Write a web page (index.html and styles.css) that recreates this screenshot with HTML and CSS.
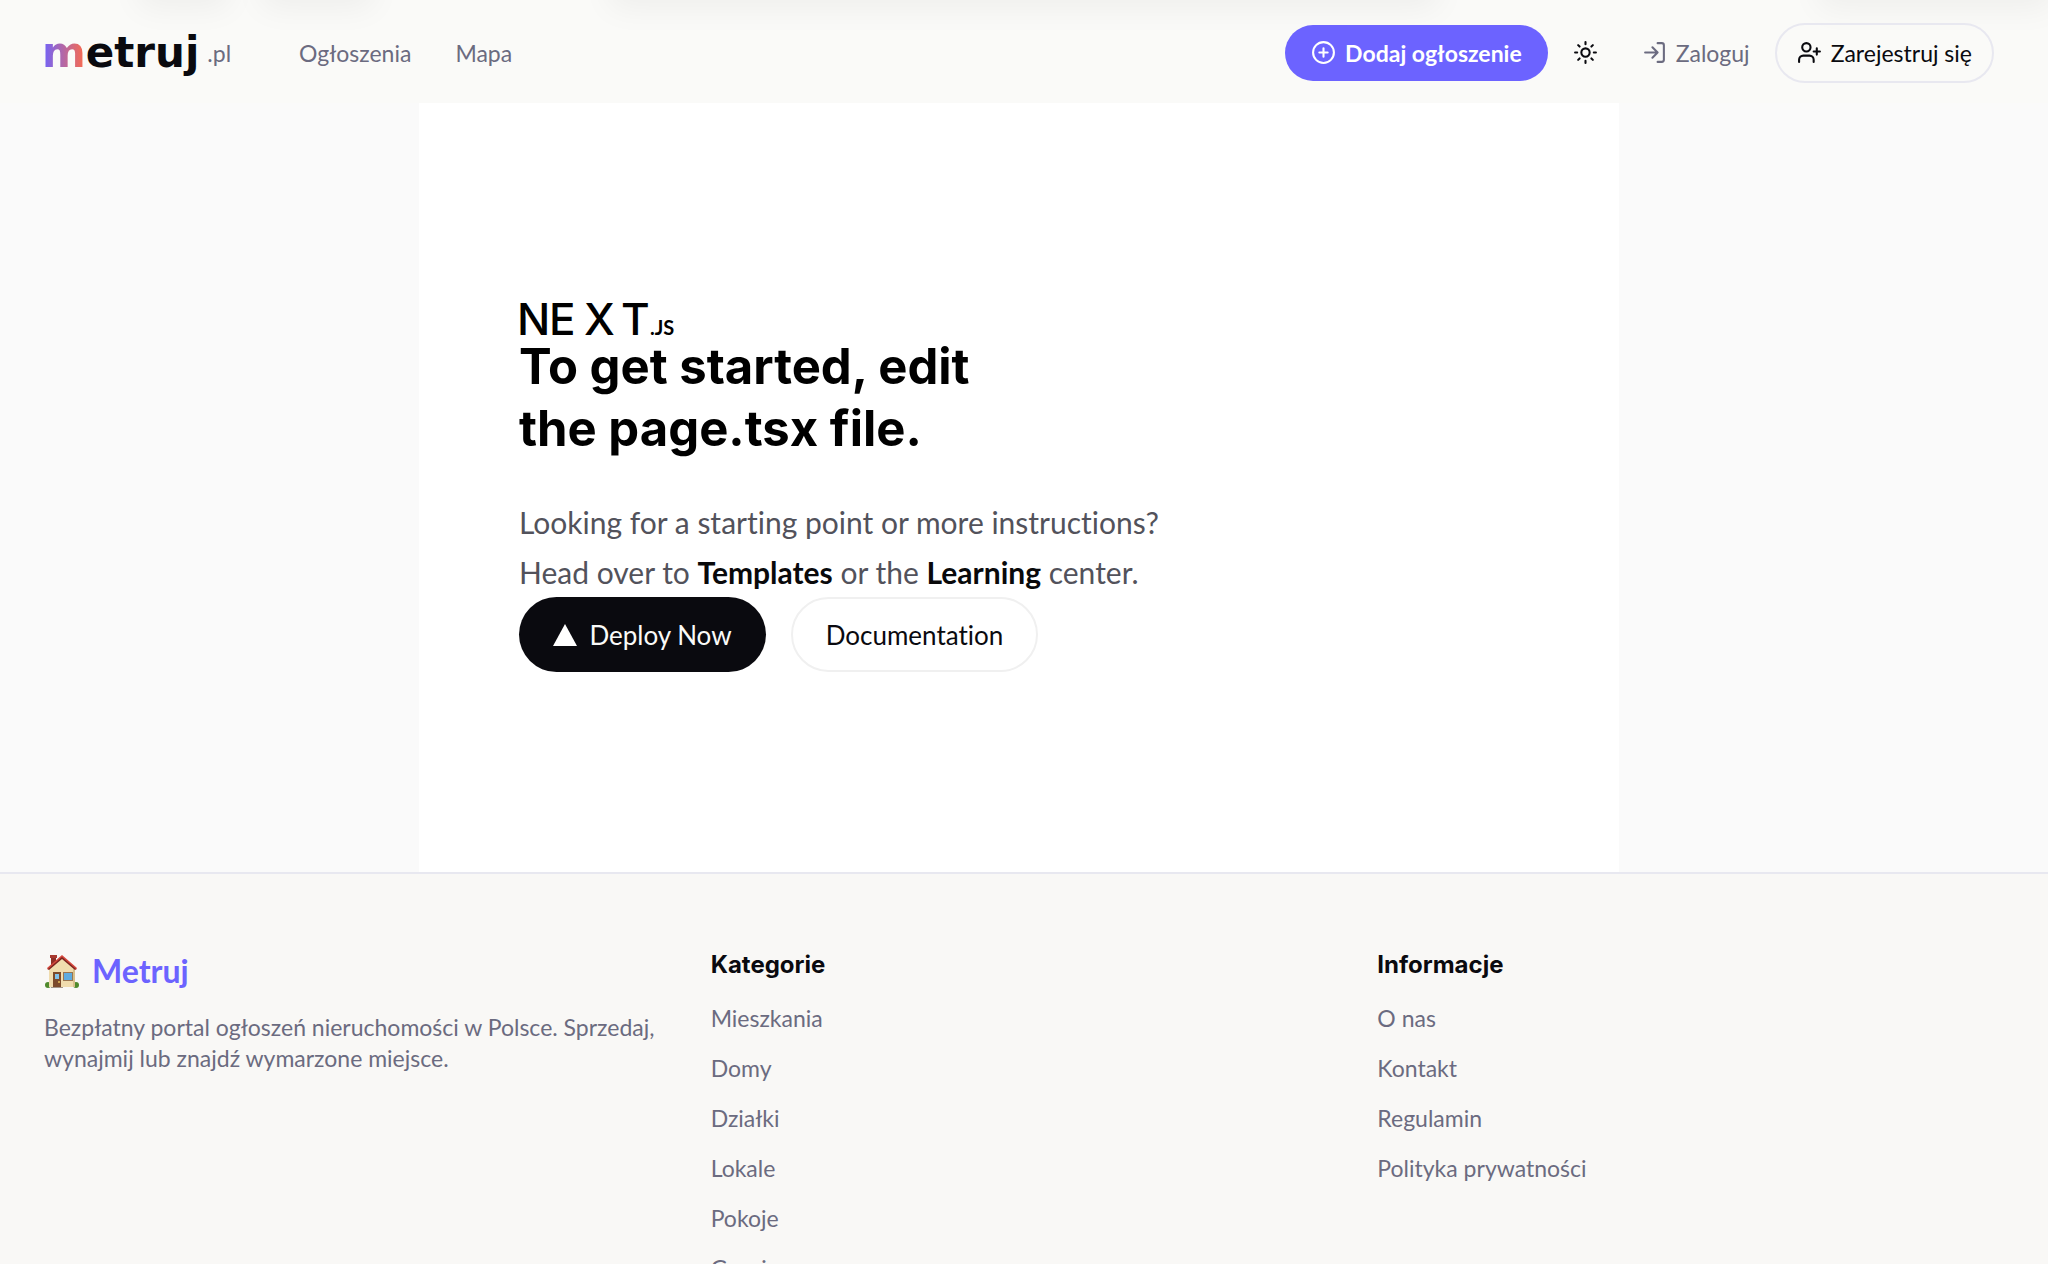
FILE: index.html
```html
<!DOCTYPE html>
<html lang="pl">
<head>
    <meta charset="UTF-8">
    <meta name="viewport" content="width=device-width, initial-scale=1.0">
    <title>Metruj.pl</title>
    <link rel="stylesheet" href="styles.css">
</head>
<body>
    <header class="header">
        <!-- soft shadows along the top edge -->
        <span class="shade shade-1"></span>
        <span class="shade shade-2"></span>
        <span class="shade shade-3"></span>
        <span class="shade shade-4"></span>
        <a class="brand" href="#"><span class="brand-name"><span class="brand-m">m</span>etruj</span><span class="brand-tld">.pl</span></a>
        <nav class="nav">
            <a href="#">Ogłoszenia</a>
            <a href="#">Mapa</a>
        </nav>
        <div class="actions">
            <button class="btn btn-primary" type="button">
                <svg class="icon" viewBox="0 0 24 24"><circle cx="12" cy="12" r="10"/><path d="M8 12h8M12 8v8"/></svg>
                Dodaj ogłoszenie
            </button>
            <button class="btn-theme" type="button" aria-label="Zmień motyw">
                <svg class="icon" viewBox="0 0 24 24"><circle cx="12" cy="12" r="4"/><path d="M12 2v2M12 20v2M4.93 4.93l1.41 1.41M17.66 17.66l1.41 1.41M2 12h2M20 12h2M6.34 17.66l-1.41 1.41M19.07 4.93l-1.41 1.41"/></svg>
            </button>
            <a class="btn btn-ghost" href="#">
                <svg class="icon" viewBox="0 0 24 24"><path d="M15 3h4a2 2 0 0 1 2 2v14a2 2 0 0 1-2 2h-4M10 17l5-5-5-5M15 12H3"/></svg>
                Zaloguj
            </a>
            <a class="btn btn-outline" href="#">
                <svg class="icon" viewBox="0 0 24 24"><path d="M16 21v-2a4 4 0 0 0-4-4H6a4 4 0 0 0-4 4v2"/><circle cx="9" cy="7" r="4"/><path d="M19 8v6M22 11h-6"/></svg>
                Zarejestruj się
            </a>
        </div>
    </header>

    <div class="page">
        <main class="main">
            <svg class="next-logo" viewBox="0 0 158 34" role="img" aria-label="Next.js logo">
                <text class="next-word" x="-2 30 65 102" y="33">NEXT</text>
                <text class="next-js" x="131" y="33">.JS</text>
            </svg>
            <h1 class="title">To get started, edit<br>the page.tsx file.</h1>
            <p class="intro">Looking for a starting point or more instructions?<br>Head over to <a href="#">Templates</a> or the <a href="#">Learning</a> center.</p>
            <div class="links">
                <a class="pill pill-dark" href="#">
                    <svg class="triangle" viewBox="0 0 24 22"><path d="M12 0l12 22H0z"/></svg>
                    Deploy Now
                </a>
                <a class="pill pill-light" href="#">Documentation</a>
            </div>
        </main>
    </div>

    <footer class="footer">
        <div>
            <a class="footer-brand" href="#">
                <svg class="house" viewBox="0 0 36 36">
                    <ellipse cx="4" cy="32" rx="3" ry="3" fill="#4f8a2c"/>
                    <ellipse cx="32" cy="32" rx="3" ry="3" fill="#4f8a2c"/>
                    <path d="M7 3h5v10H7z" fill="#8f2f27"/>
                    <path d="M6 2h7v3H6z" fill="#a83a30"/>
                    <path d="M5 16L18 5l13 11v18H5z" fill="#f0dcae"/>
                    <path d="M29 15l2 2v17h-2z" fill="#d8c08c"/>
                    <path d="M18 2l15 13-1 2L18 5 4 17l-1-2z" fill="#d5483d"/>
                    <path d="M18 4l14 12-1 1L18 6 5 17l-1-1z" fill="#7d2520"/>
                    <path d="M9 19h8v15H9z" fill="#7b4a2b"/>
                    <path d="M11 21h4v5h-4z" fill="#7fc0ea"/>
                    <circle cx="15" cy="29" r="1" fill="#e5bd5b"/>
                    <path d="M19 19h10v9H19z" fill="#9a7650"/>
                    <path d="M20 20h8v7h-8z" fill="#5fabdf"/>
                    <path d="M7 34h12v1H7z" fill="#a3968a"/>
                </svg>
                Metruj
            </a>
            <p class="about">Bezpłatny portal ogłoszeń nieruchomości w Polsce. Sprzedaj, wynajmij lub znajdź wymarzone miejsce.</p>
        </div>
        <div>
            <h2 class="footer-title">Kategorie</h2>
            <ul class="footer-list">
                <li><a href="#">Mieszkania</a></li>
                <li><a href="#">Domy</a></li>
                <li><a href="#">Działki</a></li>
                <li><a href="#">Lokale</a></li>
                <li><a href="#">Pokoje</a></li>
                <li><a href="#">Garaże</a></li>
            </ul>
        </div>
        <div>
            <h2 class="footer-title">Informacje</h2>
            <ul class="footer-list">
                <li><a href="#">O nas</a></li>
                <li><a href="#">Kontakt</a></li>
                <li><a href="#">Regulamin</a></li>
                <li><a href="#">Polityka prywatności</a></li>
            </ul>
        </div>
    </footer>
</body>
</html>
```
FILE: styles.css
```css
* {
    box-sizing: border-box;
}
:root {
    --ink: #0a0a0f;
    --muted: #6b6b80;
    --accent: #6c63ff;
    --line: #e8e8f0;
}
body {
    margin: 0;
    height: 100vh;
    overflow: hidden;
    background: #fafafa;
    color: var(--ink);
    font-family: Lato, sans-serif;
    font-size: 23px;
    font-variant-ligatures: none;
}
a {
    color: inherit;
    text-decoration: none;
}
h1, h2, p, ul {
    margin: 0;
    padding: 0;
}

/* header */
.header {
    position: relative;
    isolation: isolate;
    display: flex;
    align-items: center;
    height: 103px;
    padding: 2px 54px 0 42px;
    overflow: hidden;
    background: #fafaf8;
}
.shade {
    position: absolute;
    z-index: -1;
    top: -40px;
    height: 40px;
    box-shadow: 0 4px 32px 4px rgba(0, 0, 0, 0.05);
}
.shade-1 {
    left: 7%;
    width: 4%;
}
.shade-2 {
    left: 13%;
    width: 5%;
}
.shade-3 {
    left: 30%;
    width: 40%;
}
.shade-4 {
    left: 89%;
    width: 11%;
}
.brand {
    display: flex;
    align-items: center;
    gap: 8px;
}
.brand-name {
    font-family: "DejaVu Sans", sans-serif;
    font-size: 42px;
    font-weight: bold;
    line-height: 50px;
}
.brand-m {
    background: linear-gradient(90deg, #6c63ff, #ff6b47);
    background-clip: text;
    -webkit-background-clip: text;
    color: transparent;
}
.brand-tld {
    color: var(--muted);
}
.nav {
    display: flex;
    gap: 44px;
    margin-left: 68px;
    color: var(--muted);
}
.actions {
    display: flex;
    align-items: center;
    margin-left: auto;
}
.icon {
    width: 25px;
    height: 25px;
    fill: none;
    stroke: currentColor;
    stroke-width: 2;
    stroke-linecap: round;
    stroke-linejoin: round;
}
.btn {
    display: flex;
    align-items: center;
    gap: 9px;
    height: 56px;
    border: 0;
    border-radius: 28px;
    font: inherit;
    white-space: nowrap;
}
.btn-primary {
    padding: 0 26px;
    background: var(--accent);
    color: #fff;
    font-weight: bold;
}
.btn-theme {
    display: flex;
    padding: 25px;
    border: 0;
    background: none;
    color: var(--ink);
}
.btn-ghost {
    padding: 0 25px 0 19px;
    color: var(--muted);
}
.btn-outline {
    height: 60px;
    padding: 0 20px;
    border: 2px solid var(--line);
    border-radius: 30px;
}

/* content */
.page {
    display: flex;
    justify-content: center;
    padding-right: 10px;
}
.main {
    width: 100%;
    max-width: 1200px;
    padding: 199px 100px 200px;
    background: #fff;
}
.next-logo {
    display: block;
    width: 158px;
    height: 34px;
    overflow: visible;
}
.next-word {
    font-family: Inter, sans-serif;
    font-size: 44px;
    font-weight: 500;
}
.next-js {
    font-size: 20px;
    font-weight: bold;
}
.title {
    color: #000;
    font-family: Inter, sans-serif;
    font-size: 49px;
    font-weight: 700;
    line-height: 62px;
}
.intro {
    margin-top: 37px;
    color: #52525b;
    font-size: 30px;
    line-height: 50px;
}
.intro a {
    color: #09090b;
    font-weight: bold;
}
.links {
    display: flex;
    gap: 25px;
}
.pill {
    display: flex;
    align-items: center;
    justify-content: center;
    gap: 12px;
    width: 247px;
    height: 75px;
    border-radius: 38px;
    font-size: 26px;
}
.pill-dark {
    background: var(--ink);
    color: #fafaf8;
}
.pill-light {
    border: 2px solid #f0f0f0;
}
.triangle {
    width: 24px;
    height: 22px;
    fill: #fff;
}

/* footer */
.footer {
    display: grid;
    grid-template-columns: repeat(3, 1fr);
    gap: 50px;
    padding: 75px 54px 75px 44px;
    border-top: 2px solid var(--line);
    background: #f9f8f6;
    color: var(--muted);
}
.footer-brand {
    display: flex;
    align-items: center;
    gap: 12px;
    margin-bottom: 19px;
    color: var(--accent);
    font-size: 32px;
    font-weight: bold;
    line-height: 44px;
}
.house {
    width: 36px;
    height: 36px;
}
.about {
    line-height: 31px;
}
.footer-title {
    margin-bottom: 23px;
    color: var(--ink);
    font-family: Inter, sans-serif;
    font-size: 24px;
    font-weight: 700;
    line-height: 31px;
}
.footer-list {
    display: grid;
    gap: 19px;
    line-height: 31px;
    list-style: none;
}
```
